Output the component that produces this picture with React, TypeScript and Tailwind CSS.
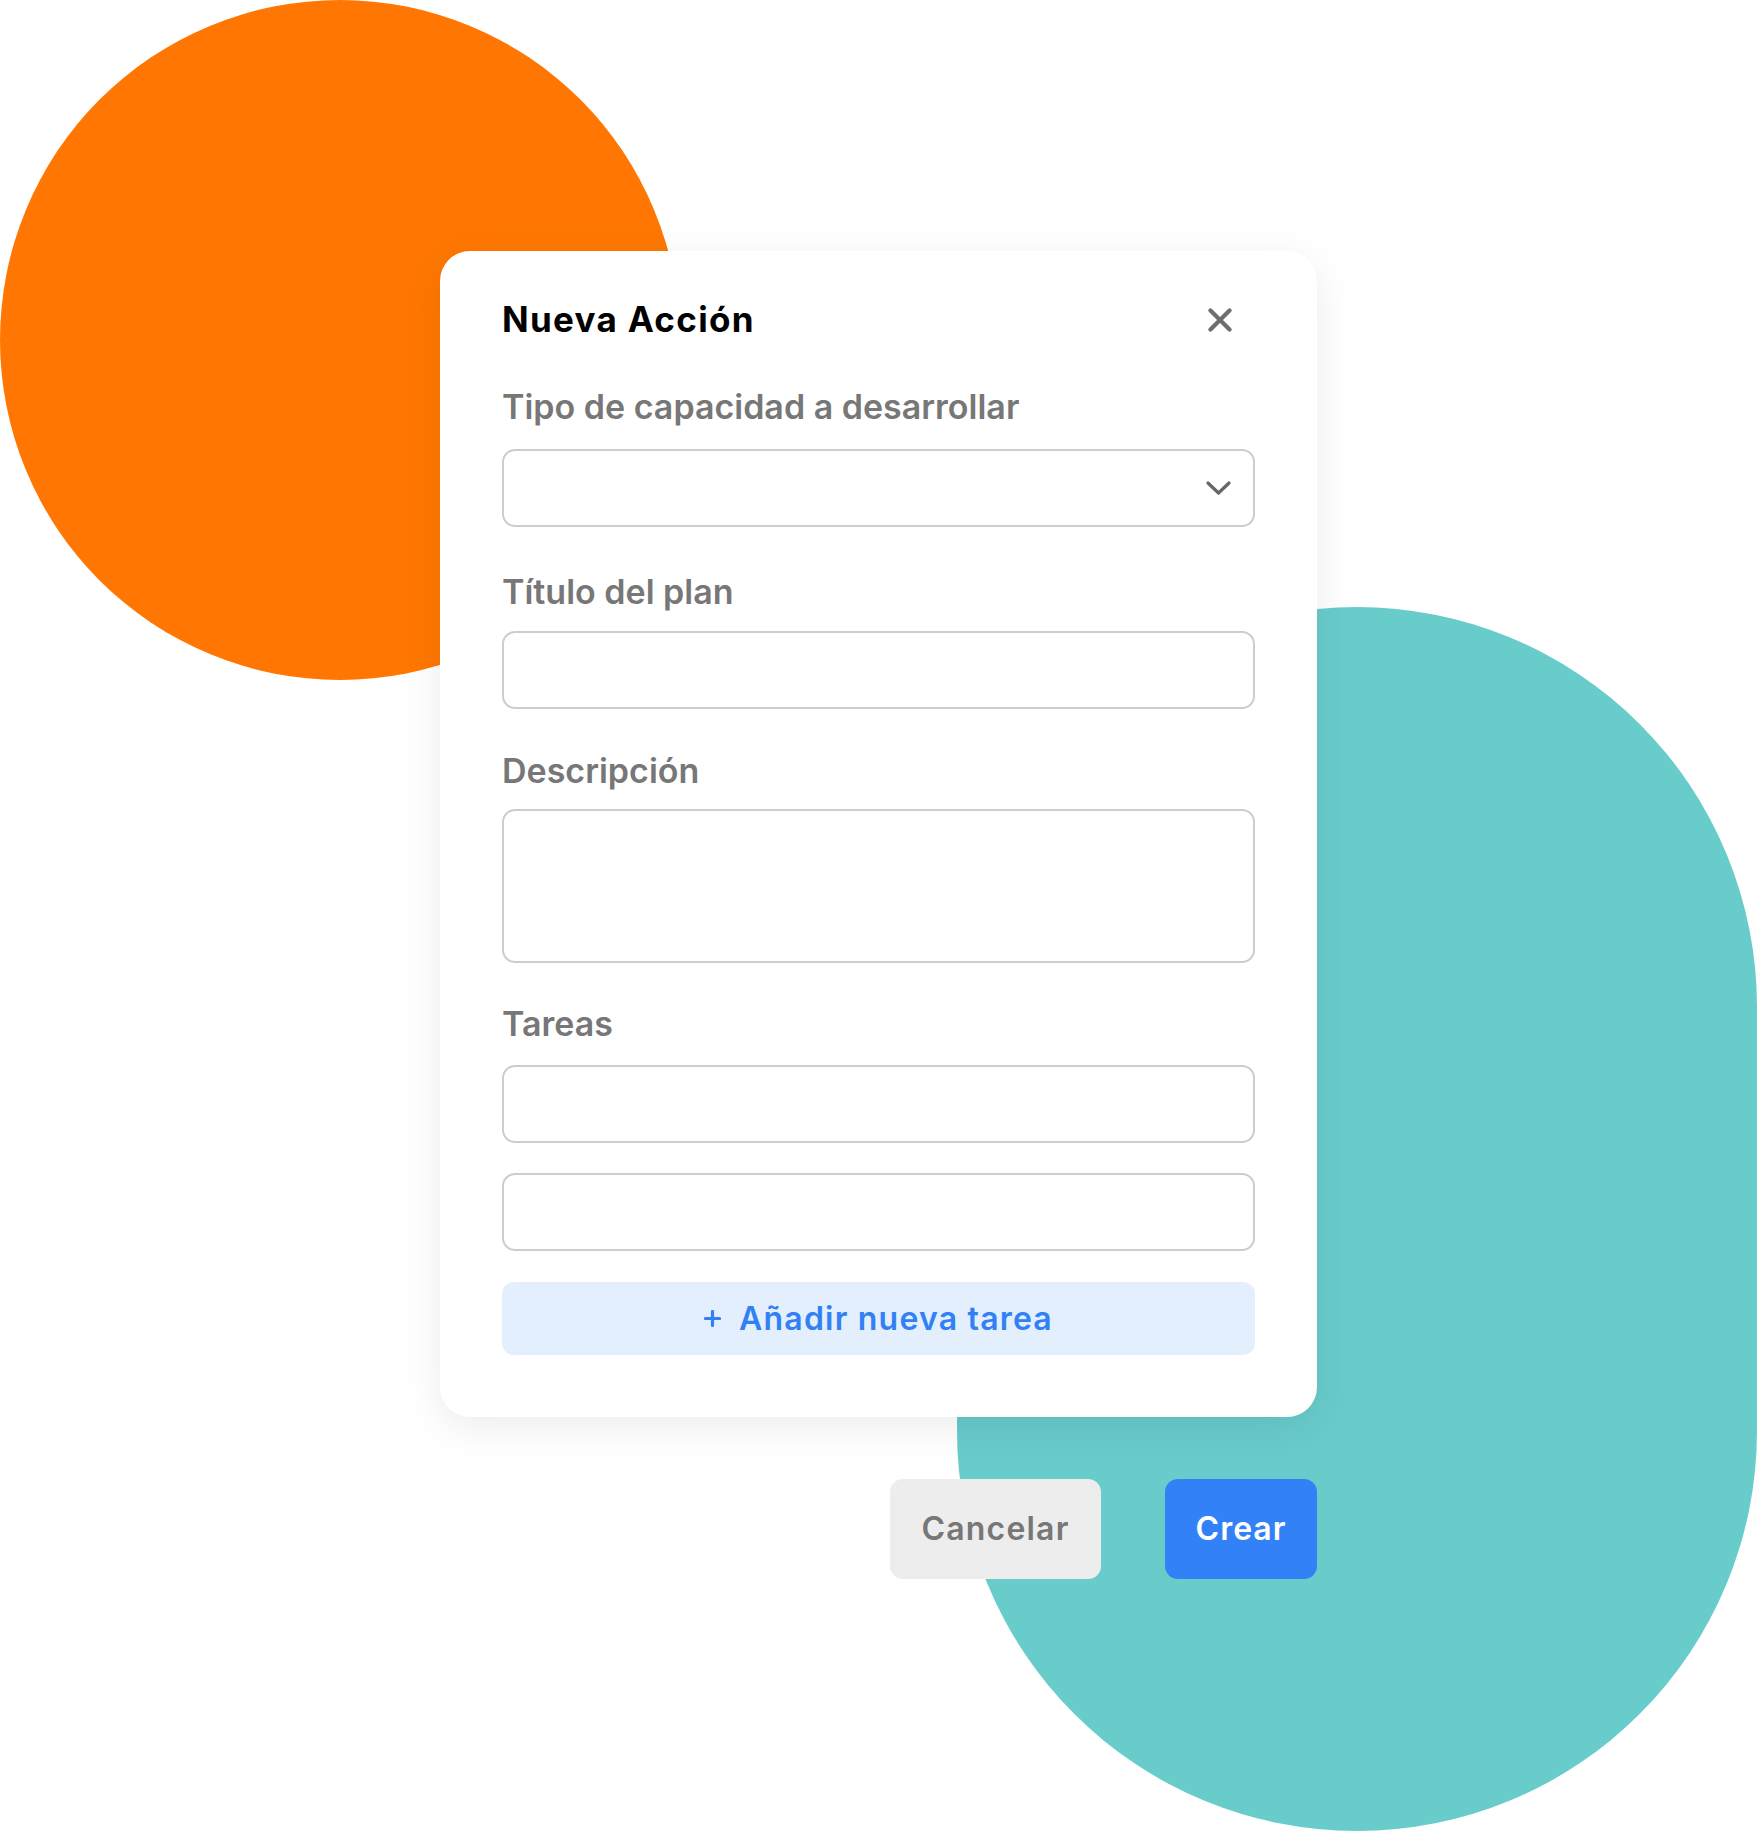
import React from "react";

const font = { fontFamily: "Inter, 'Noto Sans', sans-serif" };

function Label({ children, className = "" }: { children: React.ReactNode; className?: string }) {
  return (
    <div className={`text-[34px] leading-[34px] font-semibold text-[#777777] ${className}`}>{children}</div>
  );
}

function Field({ className = "" }: { className?: string }) {
  return (
    <input
      readOnly
      className={`block w-full h-[78px] rounded-[13px] border-2 border-[#cdcdcd] bg-white outline-none ${className}`}
    />
  );
}

export default function App() {
  return (
    <div className="relative w-[1757px] h-[1831px] overflow-hidden bg-white" style={font}>
      <div className="absolute left-0 top-0 w-[680px] h-[680px] rounded-full bg-[#ff7702]" />
      <div className="absolute left-[957px] top-[607px] w-[800px] h-[1224px] rounded-full bg-[#68cccb]" />

      <div className="relative z-10 pl-[440px] pt-[251px]">
        <div className="w-[877px] rounded-[30px] bg-white px-[62px] pt-[51px] pb-[62px] shadow-[0_10px_40px_rgba(0,0,0,0.08)]">
          <div className="flex items-center justify-between h-[35px]">
            <h1 className="text-[35px] leading-[35px] font-bold tracking-[1.3px] text-black">Nueva Acción</h1>
            <svg className="mr-[23px]" width="24" height="24" viewBox="0 0 24 24" fill="none">
              <path d="M2.5 2.5L21.5 21.5M21.5 2.5L2.5 21.5" stroke="#6e6e6e" strokeWidth="4.2" strokeLinecap="round" />
            </svg>
          </div>

          <Label className="mt-[53px]">Tipo de capacidad a desarrollar</Label>
          <div className="mt-[25px] flex h-[78px] items-center justify-end rounded-[13px] border-2 border-[#cdcdcd] pr-[22px]">
            <svg width="25" height="14" viewBox="0 0 25 14" fill="none">
              <path d="M2 2L12.5 12L23 2" stroke="#666666" strokeWidth="3.2" strokeLinecap="round" strokeLinejoin="round" />
            </svg>
          </div>

          <Label className="mt-[48px]">Título del plan</Label>
          <Field className="mt-[22px]" />

          <Label className="mt-[45px]">Descripción</Label>
          <textarea
            readOnly
            className="mt-[21px] block w-full h-[154px] resize-none rounded-[13px] border-2 border-[#cdcdcd] bg-white outline-none"
          />

          <Label className="mt-[44px]">Tareas</Label>
          <Field className="mt-[24px]" />
          <Field className="mt-[30px]" />

          <button className="mt-[31px] flex w-full h-[73px] items-center justify-center gap-[18px] rounded-[12px] bg-[#e3effc] text-[32px] font-semibold tracking-[1.2px] text-[#3181f5]">
            <svg width="17" height="17" viewBox="0 0 17 17" fill="none">
              <path d="M8.5 1.5V15.5M1.5 8.5H15.5" stroke="#3181f5" strokeWidth="3.2" strokeLinecap="round" />
            </svg>
            <span>Añadir nueva tarea</span>
          </button>
        </div>

        <div className="mt-[62px] flex w-[877px] justify-end gap-[64px]">
          <button className="h-[100px] w-[211px] rounded-[13px] bg-[#ededed] text-[32px] font-semibold tracking-[1.2px] text-[#777777]">
            Cancelar
          </button>
          <button className="h-[100px] w-[152px] rounded-[13px] bg-[#3381f6] text-[32px] font-semibold tracking-[1px] text-white">
            Crear
          </button>
        </div>
      </div>
    </div>
  );
}
